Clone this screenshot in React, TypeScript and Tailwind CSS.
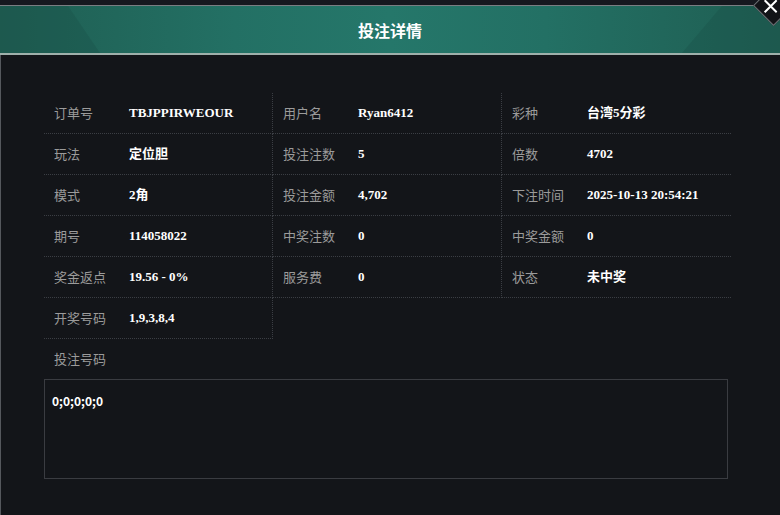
import React from "react";

type Field = { label: string; value: string };

const FIELDS: Field[] = [
  { label: "订单号", value: "TBJPPIRWEOUR" },
  { label: "用户名", value: "Ryan6412" },
  { label: "彩种", value: "台湾5分彩" },
  { label: "玩法", value: "定位胆" },
  { label: "投注注数", value: "5" },
  { label: "倍数", value: "4702" },
  { label: "模式", value: "2角" },
  { label: "投注金额", value: "4,702" },
  { label: "下注时间", value: "2025-10-13 20:54:21" },
  { label: "期号", value: "114058022" },
  { label: "中奖注数", value: "0" },
  { label: "中奖金额", value: "0" },
  { label: "奖金返点", value: "19.56 - 0%" },
  { label: "服务费", value: "0" },
  { label: "状态", value: "未中奖" },
  { label: "开奖号码", value: "1,9,3,8,4" },
];

const sans = "font-['Microsoft_YaHei','Noto_Sans_CJK_SC',sans-serif]";
const serif = "font-['Liberation_Serif','Noto_Sans_CJK_SC',serif]";

// ─── Title bar with the diamond close button ───────────────────────────
function Header() {
  return (
    <div className="relative flex flex-col">
      <div className="h-[5px] bg-[#16181f]" />
      <div className="h-px bg-[#7a7d82]" />
      <div className="relative flex h-[47px] items-center justify-center overflow-hidden bg-[linear-gradient(90deg,#1f5e52_0%,#237064_30%,#25776a_50%,#237064_70%,#1f5e52_100%)]">
        <svg className="absolute inset-0" width="780" height="47" viewBox="0 0 780 47">
          <polygon points="0,0 68,0 100,47 0,47" fill="#1b5047" opacity="0.35" />
          <polygon points="780,0 722,0 682,47 780,47" fill="#1b5047" opacity="0.35" />
        </svg>
        <span className={`relative text-[16px] font-bold text-white ${sans}`}>投注详情</span>
      </div>
      <div className="h-[2px] bg-[#9fb0ab]" />

      {/* close button sits over the bar corner */}
      <button className="absolute right-[-8px] top-[-9px] flex h-[29px] w-[29px] rotate-45 items-center justify-center border border-[#6d7075] bg-[#121317]">
        <svg className="-rotate-45 translate-x-[-2px] translate-y-[2px]" width="14" height="14" viewBox="0 0 14 14">
          <path d="M1 1 L13 13 M13 1 L1 13" stroke="#ffffff" strokeWidth="2" />
        </svg>
      </button>
    </div>
  );
}

export default function App() {
  return (
    <div className="h-[515px] w-[780px] overflow-hidden bg-[#131519]">
      <Header />
      <div className="h-[460px] border-l border-[#55585d] pl-[43px] pt-[38px]">
        <div className="grid w-[687px] grid-cols-3">
          {FIELDS.map((f, i) => (
            <div
              key={f.label}
              className={`flex h-[41px] items-center border-b border-dotted border-[#3b3e44] ${
                i % 3 !== 2 ? "border-r" : ""
              }`}
            >
              <span className={`w-[85px] shrink-0 pl-[10px] text-[13px] text-[#9b9b9b] ${sans}`}>{f.label}</span>
              <span className={`text-[13px] font-bold text-white ${serif}`}>{f.value}</span>
            </div>
          ))}
        </div>
        <div className={`pl-[10px] pt-[9px] text-[13px] leading-[22px] text-[#9b9b9b] ${sans}`}>投注号码</div>
        <div className="mt-[9px] h-[100px] w-[684px] border border-[#3a3c41] px-[7px] pt-[8px]">
          <span className={`text-[12px] font-bold text-white ${sans}`}>0;0;0;0;0</span>
        </div>
      </div>
    </div>
  );
}
